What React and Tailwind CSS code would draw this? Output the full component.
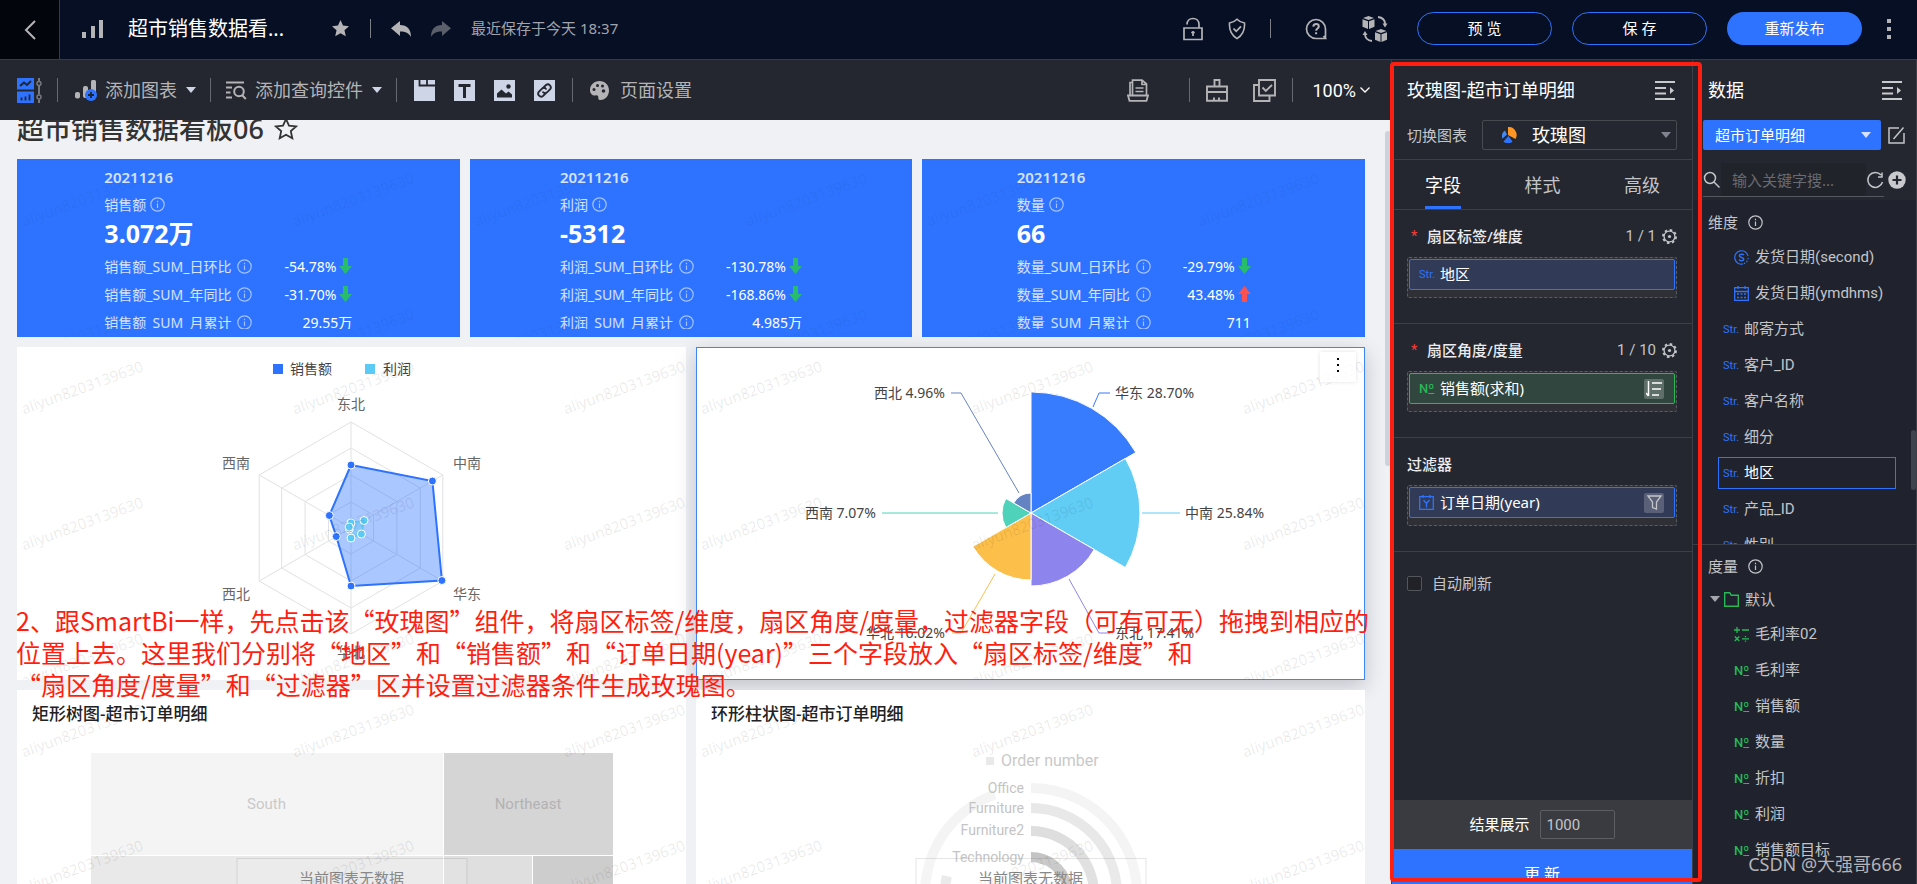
import clsx from "clsx";

const KPI_CARDS = [
  {
    date: "20211216",
    name: "销售额",
    value: "3.072万",
    rows: [
      { label: "销售额_SUM_日环比", value: "-54.78%", trend: "down" },
      { label: "销售额_SUM_年同比", value: "-31.70%", trend: "down" },
      { label: "销售额_SUM_月累计", value: "29.55万" },
    ],
  },
  {
    date: "20211216",
    name: "利润",
    value: "-5312",
    rows: [
      { label: "利润_SUM_日环比", value: "-130.78%", trend: "down" },
      { label: "利润_SUM_年同比", value: "-168.86%", trend: "down" },
      { label: "利润_SUM_月累计", value: "4.985万" },
    ],
  },
  {
    date: "20211216",
    name: "数量",
    value: "66",
    rows: [
      { label: "数量_SUM_日环比", value: "-29.79%", trend: "down" },
      { label: "数量_SUM_年同比", value: "43.48%", trend: "up" },
      { label: "数量_SUM_月累计", value: "711" },
    ],
  },
];

const DIMENSIONS = [
  { type: "second", name: "发货日期(second)", nested: true },
  { type: "date", name: "发货日期(ymdhms)", nested: true },
  { type: "str", name: "邮寄方式" },
  { type: "str", name: "客户_ID" },
  { type: "str", name: "客户名称" },
  { type: "str", name: "细分" },
  { type: "str", name: "地区", selected: true },
  { type: "str", name: "产品_ID" },
  { type: "str", name: "性别" },
];

const MEASURES = [
  { type: "calc", name: "毛利率02", nested: true },
  { type: "num", name: "毛利率", nested: true },
  { type: "num", name: "销售额", nested: true },
  { type: "num", name: "数量", nested: true },
  { type: "num", name: "折扣", nested: true },
  { type: "num", name: "利润", nested: true },
  { type: "num", name: "销售额目标", nested: true },
];

/* ---------- icons ---------- */

const Svg = ({ w, h = w, box, className, children }) => (
  <svg
    width={w}
    height={h}
    viewBox={box || `0 0 ${w} ${h}`}
    fill="none"
    stroke="currentColor"
    className={clsx("shrink-0", className)}
    aria-hidden="true"
  >
    {children}
  </svg>
);

const BackIcon = () => (
  <Svg w={14} h={20} className="text-[#b4b4b6]">
    <path d="M12 1 3 10l9 9" strokeWidth="2" />
  </Svg>
);

const BarsIcon = () => (
  <Svg w={22} h={18} className="text-[#b4b4b6]">
    <path d="M0 12h4v6H0zM9 6h4v12H9zM17 0h4v18h-4z" fill="currentColor" stroke="none" />
  </Svg>
);

const StarIcon = () => (
  <Svg w={17} h={17} box="0 0 24 24" className="text-[#b4b4b6]">
    <path d="m12 0 3.500 7.900 8.500.9-6.400 5.700 1.900 8.500L12 18.600 4.500 23l1.900-8.500L0 8.800l8.500-.9z" fill="currentColor" stroke="none" />
  </Svg>
);

const StarOutline = () => (
  <Svg w={24} h={24} className="text-[#333]">
    <path d="m12 2 3 6.600 7.200.8-5.400 4.800 1.500 7.100L12 17.700l-6.300 3.600 1.500-7.100L1.800 9.400 9 8.600z" strokeWidth="1.8" />
  </Svg>
);

const UndoIcon = ({ className }) => (
  <Svg w={20} h={16} className={className}>
    <path d="M9 0v4c7 0 11 4 11 12-2.500-4-5-5.500-11-5.500V15L0 7.300z" fill="currentColor" stroke="none" />
  </Svg>
);

const LockIcon = () => (
  <Svg w={20} h={24} className="text-[#b4b4b6]">
    <path d="M1 11h18v11.500H1zM4 7.500C4 4 6.500 1.500 10 1.500S16 4 16 7.500V11" strokeWidth="1.700" />
    <path d="M10 14v5M8.200 15.500h3.600" strokeWidth="1.700" />
  </Svg>
);

const ShieldIcon = () => (
  <Svg w={18} h={22}>
    <path d="M9 1.200c2 2 4.500 3.300 7.500 3.800.5 7-1.500 12-7.500 15.600C3 17 1 12 1.500 5 4.500 4.500 7 3.200 9 1.200z" strokeWidth="1.600" />
    <path d="m5.500 10.500 2.700 2.800 4.800-5" strokeWidth="1.800" />
  </Svg>
);

const HelpIcon = () => (
  <Svg w={22}>
    <path d="M20.500 19.800V11A9.500 9.500 0 1 0 11 20.500h9.500l-2-2.500" strokeWidth="1.700" />
    <path d="M8.300 8.600c.1-1.700 1.200-2.600 2.800-2.600 1.600 0 2.700 1 2.700 2.400 0 2-2.700 2.200-2.700 4.300M11.100 14.300v2" strokeWidth="2" />
  </Svg>
);

const CubesIcon = () => (
  <Svg w={26}>
    <g fill="currentColor" stroke="none">
      <path d="m6.500 0 5.500 2-5.500 2L1 2zM.5 3.300 6 5.300V13L.5 10.700zM12.500 3.300 7 5.300V13l5.500-2.300z" />
      <path d="m19 13 5.500 2-5.500 2-5.500-2zM13 16.300l5.500 2V26L13 23.700zM25 16.300l-5.500 2V26l5.500-2.300z" />
      <path d="m20.500 7.500 5 0-2.500 4zM.5 19l5 0L3 15z" />
    </g>
    <path d="M16 1c4 .5 7 3 7 7M10 25c-4-.5-7-3-7-7" strokeWidth="1.800" />
  </Svg>
);

const LayoutIcon = () => (
  <Svg w={26} h={25}>
    <path d="M0 0h17v11.500H0zM0 13.500h17V25H0z" fill="#2d73ff" stroke="none" />
    <path d="m3 8 4-3.500L10 7l4-4" stroke="#1d2637" strokeWidth="2" />
    <path d="M4.500 22.500v-3M8.500 22.500v-4M12.500 22.500v-6" stroke="#1d2637" strokeWidth="1.800" />
    <path d="M22 0v3M22 8v8.500M22 21.500V25" stroke="#77797f" strokeWidth="2" />
    <circle cx="22" cy="5.500" r="2" stroke="#77797f" strokeWidth="1.500" />
    <circle cx="22" cy="19" r="2" stroke="#77797f" strokeWidth="1.500" />
  </Svg>
);

const AddChartIcon = () => (
  <Svg w={22} h={21}>
    <rect x="0" y="12" width="5" height="6.500" rx="2" fill="#b4b4b6" stroke="none" />
    <rect x="8" y="6" width="5" height="12" rx="2" fill="#b4b4b6" stroke="none" />
    <rect x="16" y="0" width="5" height="14" rx="1.500" fill="#b4b4b6" stroke="none" />
    <circle cx="16" cy="15" r="6" fill="#2d73ff" stroke="none" />
    <path d="M16 12v6M13 15h6" stroke="#1b2435" strokeWidth="1.800" />
  </Svg>
);

const QueryIcon = () => (
  <Svg w={21} h={19}>
    <path d="M0 1.500h18M0 6.500h6M0 11.500h4.500M0 16.500h6" strokeWidth="2" />
    <circle cx="13" cy="10.500" r="4.800" strokeWidth="2" />
    <path d="m16 14 3.800 4" strokeWidth="2" />
  </Svg>
);

const TabIcon = () => (
  <Svg w={21}>
    <path d="M0 0h21v21H0z" fill="#ced5e7" stroke="none" />
    <path d="M5.500 0v5.500H21M13 0v5" stroke="#24272f" strokeWidth="1.800" />
  </Svg>
);

const TextIcon = () => (
  <Svg w={21}>
    <path d="M0 0h21v21H0z" fill="#ced5e7" stroke="none" />
    <path d="M4.500 5.500h12M10.500 5v13" stroke="#24272f" strokeWidth="3" />
  </Svg>
);

const ImageIcon = () => (
  <Svg w={21}>
    <path d="M0 0h21v21H0z" fill="#ced5e7" stroke="none" />
    <path d="M3 17.500v-4l4.500-4 4.500 4 2.500-2 3.500 3v3z" fill="#24272f" stroke="none" />
    <circle cx="14.500" cy="6.500" r="2.200" fill="#24272f" stroke="none" />
  </Svg>
);

const LinkIcon = () => (
  <Svg w={21}>
    <path d="M0 0h21v21H0z" fill="#ced5e7" stroke="none" />
    <g stroke="#24272f" strokeWidth="1.800" strokeLinecap="round">
      <path d="M9.500 7.500 12 5a3 3 0 0 1 4.200 4.200l-3 3a3 3 0 0 1-4.200 0" />
      <path d="M11.500 13.500 9 16a3 3 0 0 1-4.200-4.200l3-3a3 3 0 0 1 4.200 0" />
    </g>
  </Svg>
);

const PaletteIcon = () => (
  <Svg w={19}>
    <path
      d="M9.500 0C4 0 0 4 0 9c0 4 3 6 5.500 5.500 2-.5 3 .5 2.800 2.200C8.200 18.300 9 19 10.500 19 15.500 19 19 14.500 19 9.500 19 4 15 0 9.500 0z"
      fill="currentColor"
      stroke="none"
    />
    <g fill="#24272f" stroke="none">
      <circle cx="4" cy="8.500" r="1.500" />
      <circle cx="7.500" cy="4.500" r="1.500" />
      <circle cx="12.500" cy="5" r="1.500" />
      <circle cx="13.500" cy="10" r="1.800" />
    </g>
  </Svg>
);

const PrintIcon = () => (
  <Svg w={22} h={23}>
    <path d="M3 16V3.500h2.500M5.500 16V1.200h9.500L19.500 5v11M15 1v4.500h4.500" strokeWidth="1.700" />
    <path d="M8.500 9h8M8.500 12.500h8" strokeWidth="1.700" />
    <path d="M1 16.500h20l-1.500 5.300h-17z" strokeWidth="1.800" />
  </Svg>
);

const BrushIcon = () => (
  <Svg w={22} h={23}>
    <path d="M8.500 7.500V1h5v6.500M1 7.500h20v14.300H1zM1 13h20" strokeWidth="1.900" />
    <path d="M8 22v-3.500M13 22v-3.500" strokeWidth="1.900" />
  </Svg>
);

const CopyIcon = () => (
  <Svg w={23} h={23}>
    <path d="M6 1h16v15.500H6zM6 6H1v16h15.500v-5" strokeWidth="1.900" />
    <path d="m9.500 8.500 3.300 3.500L19 6" strokeWidth="1.900" />
  </Svg>
);

const CollapseIcon = () => (
  <Svg w={20} h={19} className="text-[#c9cacd]">
    <path d="M0 1h20M0 7h11M0 12.500h11M0 18h20" strokeWidth="1.900" />
    <path d="m15 6 4 3.500-4 3.500z" fill="currentColor" stroke="none" />
  </Svg>
);

const InfoIcon = ({ className }) => (
  <Svg w={15} className={className}>
    <circle cx="7.500" cy="7.500" r="6.700" strokeWidth="1.200" />
    <path d="M7.500 6.500V11M7.500 3.800v1.500" strokeWidth="1.200" />
  </Svg>
);

const GearIcon = () => (
  <Svg w={15} box="0 0 16 16" className="text-[#c3c5c9]">
    <circle cx="8" cy="8" r="5.800" strokeWidth="1.400" />
    <circle cx="8" cy="8" r="7" strokeWidth="2" strokeDasharray="2.750 2.750" />
    <circle cx="8" cy="8" r="1.700" fill="currentColor" stroke="none" />
  </Svg>
);

const RoseIcon = () => (
  <Svg w={15} h={16} className="pointer-events-none absolute left-5 top-[7px]">
    <path d="M6 8V0a8 8 0 0 1 7.500 12z" fill="#ff9524" stroke="none" />
    <path d="m6.500 9 4 5.500a6.500 6.500 0 0 1-9 0z" fill="#2d73ff" stroke="none" />
    <path d="M5 7.500.5 11.500A6 6 0 0 1 3 3.500z" fill="#4388f7" stroke="none" />
  </Svg>
);

const Caret = ({ className }) => (
  <Svg w={10} h={6} className={className}>
    <path d="M0 0h10L5 6z" fill="currentColor" stroke="none" />
  </Svg>
);

const TrendArrow = ({ trend }) => (
  <Svg w={13} h={16} className={trend === "up" ? "rotate-180 text-[#fb5150]" : "text-[#27bd6a]"}>
    <path d="M4 0h5v8h4l-6.500 8L0 8h4z" fill="currentColor" stroke="none" />
  </Svg>
);

const SortIcon = () => (
  <Svg w={16}>
    <path d="M2.500 0v15M0 12l2.500 3M6 2h10M6 8h9M6 14h7" strokeWidth="1.500" />
  </Svg>
);

const FunnelIcon = () => (
  <Svg w={15}>
    <path d="M1 1h13L9.500 7v7l-4-1.500V7z" strokeWidth="1.300" />
  </Svg>
);

const FieldIcon = ({ type }) => {
  if (type === "str") {
    return <span className="w-[17px] font-[Roboto] text-[11px] leading-none text-[#2d73ff]">Str.</span>;
  }
  if (type === "num") {
    return (
      <span className="w-4 font-[Roboto] text-[13px] leading-none font-medium text-[#27b956]">
        N<span className="underline underline-offset-0">º</span>
      </span>
    );
  }
  if (type === "year") {
    return (
      <Svg w={15} className="text-[#2d73ff]">
        <path d="M.7 1.700h13.600v12.600H.700zM4 0v3M11 0v3M4.500 5l3 3.500 3-3.500M7.500 8.500v4" strokeWidth="1.300" />
      </Svg>
    );
  }
  if (type === "date") {
    return (
      <Svg w={15} className="text-[#2d73ff]">
        <path d="M.7 1.700h13.600v12.600H.700zM.7 5.500h13.600M4 0v3M11 0v3" strokeWidth="1.300" />
        <path d="M3 8h9.500M3 11.500h9.500" strokeWidth="1.300" strokeDasharray="2 1.500" />
      </Svg>
    );
  }
  if (type === "second") {
    return (
      <Svg w={15} className="text-[#2d73ff]">
        <path d="M9 14A6.700 6.700 0 1 1 14 6" strokeWidth="1.200" />
        <path d="M14.200 8a6.700 6.700 0 0 1-5 6" strokeWidth="1.200" strokeDasharray="1.500 1.500" />
        <path d="M9.800 5.200C9 3.800 5.300 3.800 5.300 5.800c0 2.200 4.500 1.200 4.500 3.400 0 2-4 2-4.800.5" strokeWidth="1.400" />
      </Svg>
    );
  }
  return (
    <Svg w={15} className="text-[#27b956]">
      <path d="M0 3h6M3 0v6M8 3h7M.800 9.500l4.500 4.500M5.300 9.500.800 14M8 11.800h7M11.500 9v1.300M11.500 13.500v1.300" strokeWidth="1.300" />
    </Svg>
  );
};

/* ---------- header and toolbar ---------- */

const Header = () => (
  <header className="flex h-[60px] shrink-0 items-center border-b border-[#343a48] bg-[#060f24] text-[#b4b4b6]">
    <button aria-label="返回" className="flex h-full w-[60px] items-center justify-center border-r border-[#343a48] bg-[#02050c]">
      <BackIcon />
    </button>
    <div className="flex flex-1 items-center pb-[2px] pl-[22px]">
      <BarsIcon />
      <h1 className="ml-6 w-[204px] text-[20px] leading-7 text-white">超市销售数据看...</h1>
      <button aria-label="收藏">
        <StarIcon />
      </button>
      <span className="ml-[21px] h-[19px] w-px bg-[#7d7f86]" />
      <button aria-label="撤销" className="ml-5">
        <UndoIcon className="text-[#b4b4b6]" />
      </button>
      <button aria-label="重做" className="ml-5">
        <UndoIcon className="-scale-x-100 text-[#5b5f6b]" />
      </button>
      <span className="ml-5 text-[15px] text-[#a1a4ac]">最近保存于今天 18:37</span>
    </div>
    <div className="flex items-center pb-[2px] pr-[26px]">
      <button aria-label="解锁"><LockIcon /></button>
      <button aria-label="安全" className="ml-[25px]"><ShieldIcon /></button>
      <span className="ml-6 h-[19px] w-px bg-[#7d7f86]" />
      <button aria-label="帮助" className="ml-[34px]"><HelpIcon /></button>
      <button aria-label="资源迁移" className="ml-[35px]"><CubesIcon /></button>
      <button className="ml-[29px] h-[33px] w-[135px] rounded-full border border-[#2d73ff] text-[15px] text-white">预 览</button>
      <button className="ml-5 h-[33px] w-[135px] rounded-full border border-[#2d73ff] text-[15px] text-white">保 存</button>
      <button className="ml-5 h-[33px] w-[135px] rounded-full bg-[#2d73ff] text-[15px] text-white">重新发布</button>
      <button aria-label="更多" className="ml-[25px] flex flex-col gap-1">
        <span className="size-1 bg-current" />
        <span className="size-1 bg-current" />
        <span className="size-1 bg-current" />
      </button>
    </div>
  </header>
);

const Divider = ({ className }) => <span className={clsx("h-6 w-px bg-[#66696f]", className)} />;

const Toolbar = () => (
  <div className="flex h-[60px] shrink-0 items-center bg-[#24272f] pl-[17px] text-[18px] text-[#b4b4b6]">
    <button aria-label="布局"><LayoutIcon /></button>
    <Divider className="ml-[14px]" />
    <button className="ml-[17px] flex items-center whitespace-nowrap">
      <AddChartIcon />
      <span className="ml-2">添加图表</span>
      <Caret className="ml-[9px] text-[#ced5e7]" />
    </button>
    <Divider className="ml-[14px]" />
    <button className="ml-[15px] flex items-center whitespace-nowrap">
      <QueryIcon />
      <span className="ml-2">添加查询控件</span>
      <Caret className="ml-[9px] text-[#ced5e7]" />
    </button>
    <Divider className="ml-[14px]" />
    <div className="ml-[17px] flex gap-[19px]">
      <button aria-label="标签页"><TabIcon /></button>
      <button aria-label="文本"><TextIcon /></button>
      <button aria-label="图片"><ImageIcon /></button>
      <button aria-label="链接"><LinkIcon /></button>
    </div>
    <Divider className="ml-[17px]" />
    <button className="ml-[17px] flex items-center whitespace-nowrap">
      <PaletteIcon />
      <span className="ml-[11px]">页面设置</span>
    </button>
    <div className="ml-auto flex items-center pr-[21px]">
      <button aria-label="打印"><PrintIcon /></button>
      <Divider className="ml-10" />
      <button aria-label="清除格式" className="ml-4"><BrushIcon /></button>
      <button aria-label="批量操作" className="ml-[25px]"><CopyIcon /></button>
      <Divider className="ml-4" />
      <button className="ml-[19px] flex items-center gap-1 font-[Roboto] text-white">
        100%
        <Svg w={10} h={6}>
          <path d="m.500.500 4.500 4.500L9.500.5" strokeWidth="1.300" />
        </Svg>
      </button>
    </div>
  </div>
);

/* ---------- dashboard ---------- */

const Watermark = ({ light }) => (
  <div
    aria-hidden="true"
    className={clsx(
      "pointer-events-none absolute inset-0 grid auto-rows-[136px] grid-cols-[repeat(3,271px)] overflow-hidden text-[15px]",
      light ? "text-[#000]/[0.05]" : "text-[#000]/[0.09]",
    )}
  >
    {Array.from({ length: 9 }, (_, i) => (
      <span key={i} className="flex h-20 w-[130px] -rotate-20 items-center justify-center">
        aliyun8203139630
      </span>
    ))}
  </div>
);

const KpiCard = ({ card }) => (
  <div className="relative flex h-[178px] justify-center overflow-hidden bg-[#2d73ff] pr-5 pt-[5px] text-[14px] text-white">
    <Watermark light />
    <div className="h-[165px] overflow-hidden">
      <p className="text-[15px] leading-[27px] font-semibold text-white/80">{card.date}</p>
      <p className="flex h-[27px] items-center gap-1 text-white/80">
        {card.name}
        <InfoIcon className="opacity-70" />
      </p>
      <p className="mb-1 text-[25px] leading-[30px] font-bold">{card.value}</p>
      {card.rows.map((row) => (
        <div key={row.label} className="flex h-7 items-center justify-between gap-8">
          <span className="flex items-center gap-[6px] text-white/80">
            {row.label}
            <InfoIcon className="opacity-70" />
          </span>
          <span className="flex items-center gap-[3px]">
            {row.value}
            {row.trend && <TrendArrow trend={row.trend} />}
          </span>
        </div>
      ))}
    </div>
  </div>
);

const polar = (cx, cy, r, deg) => {
  const a = ((deg - 90) * Math.PI) / 180;
  return [cx + r * Math.cos(a), cy + r * Math.sin(a)];
};

const hexPoints = (radii) =>
  radii.map((r, i) => polar(334, 181, r, i * 60).map((n) => n.toFixed(1)).join(",")).join(" ");

const RADAR_SERIES = [
  { name: "销售额", color: "#2d73ff", values: [63, 94, 105, 58, 17, 25] },
  { name: "利润", color: "#5bcaf5", values: [5, 15, 12, 10, 2, 2] },
];

const RADAR_LABELS = [
  { text: "东北", x: 334, y: 62 },
  { text: "中南", x: 450, y: 121 },
  { text: "华东", x: 450, y: 252 },
  { text: "华北", x: 334, y: 310 },
  { text: "西北", x: 219, y: 252 },
  { text: "西南", x: 219, y: 121 },
];

const RadarChart = () => (
  <svg width="669" height="333" viewBox="0 0 669 333" className="shrink-0 text-[14px]" role="img" aria-label="雷达图">
    <rect x="256" y="17" width="10" height="10" fill="#2d73ff" />
    <text x="273" y="27" fill="#444">销售额</text>
    <rect x="348" y="17" width="10" height="10" fill="#5bcaf5" />
    <text x="366" y="27" fill="#444">利润</text>
    <g fill="none" stroke="#e2e2e4">
      {[26, 53, 80, 106].map((r) => (
        <polygon key={r} points={hexPoints([r, r, r, r, r, r])} />
      ))}
      {[0, 60, 120, 180, 240, 300].map((deg) => {
        const [x, y] = polar(334, 181, 106, deg);
        return <line key={deg} x1="334" y1="181" x2={x} y2={y} />;
      })}
    </g>
    {RADAR_SERIES.map((s) => (
      <g key={s.name}>
        <polygon points={hexPoints(s.values)} fill={s.color} fillOpacity="0.4" stroke={s.color} strokeWidth="2" />
        {s.values.map((r, i) => {
          const [x, y] = polar(334, 181, r, i * 60);
          return <circle key={i} cx={x} cy={y} r="4" fill={s.color} stroke="#fff" />;
        })}
      </g>
    ))}
    {RADAR_LABELS.map((l) => (
      <text key={l.text} x={l.x} y={l.y} textAnchor="middle" fill="#666">
        {l.text}
      </text>
    ))}
  </svg>
);

const ROSE_SLICES = [
  { label: "华东 28.70%", r: 121, color: "#377bff", line: "397,60 403,46 414,46", x: 419, y: 51 },
  { label: "中南 25.84%", r: 109, color: "#61cdf5", line: "446,166 484,166", x: 489, y: 171 },
  { label: "东北 17.41%", r: 73, color: "#8d85ed", line: "373,232 403,286 414,286", x: 419, y: 291 },
  { label: "华北 16.02%", r: 67, color: "#fcbf4a", line: "299,227 265,286 256,286", x: 249, y: 291, end: true },
  { label: "西南 7.07%", r: 29, color: "#4ed2ba", line: "302,166 186,166", x: 180, y: 171, end: true },
  { label: "西北 4.96%", r: 20, color: "#6483c2", line: "323,146 265,46 255,46", x: 249, y: 51, end: true },
];

const RoseChart = () => (
  <svg width="669" height="333" viewBox="0 0 669 333" className="shrink-0 text-[14px]" role="img" aria-label="玫瑰图">
    {ROSE_SLICES.map((s, i) => {
      const [x1, y1] = polar(335, 166, s.r, i * 60);
      const [x2, y2] = polar(335, 166, s.r, i * 60 + 60);
      return (
        <g key={s.label}>
          <path d={`M335 166 ${x1} ${y1}A${s.r} ${s.r} 0 0 1 ${x2} ${y2}z`} fill={s.color} stroke="#fff" />
          <polyline points={s.line} fill="none" stroke={s.color} />
          <text x={s.x} y={s.y} textAnchor={s.end ? "end" : "start"} fill="#444">
            {s.label}
          </text>
        </g>
      );
    })}
  </svg>
);

const NoData = () => (
  <div className="absolute top-[168px] left-1/2 flex h-10 w-[231px] -translate-x-1/2 justify-center border border-black/10 bg-white/10 pt-2 text-[15px] text-[#888]">
    当前图表无数据
  </div>
);

const TreemapPlaceholder = () => (
  <div className="mx-auto mt-[26px] grid w-[522px] grid-cols-[352px_88px_80px] grid-rows-[102px_101px] gap-px bg-white font-[Roboto] text-[15px]">
    <div className="flex items-center justify-center bg-[#f4f4f4] text-[#c9c9c9]">South</div>
    <div className="col-span-2 flex items-center justify-center bg-[#d5d5d5] text-[#b2b2b2]">Northeast</div>
    <div className="bg-[#e9e9e9]" />
    <div className="bg-[#dfdfdf]" />
    <div className="bg-[#cdcdcd]" />
  </div>
);

const RINGS = [
  { name: "Office", r: 106, end: 340, color: "#f4f4f4", y: 103 },
  { name: "Furniture", r: 86, end: 282, color: "#e8e8e8", y: 123 },
  { name: "Furniture2", r: 63, end: 200, color: "#dedede", y: 145 },
  { name: "Technology", r: 37, end: 150, color: "#c4c4c4", y: 172 },
];

const RingPlaceholder = () => (
  <svg width="669" height="160" viewBox="0 37 669 160" className="mx-auto block font-[Roboto] text-[14px]" role="img" aria-label="环形柱状图">
    <rect x="290" y="67" width="8" height="8" fill="#e9e9e9" />
    <text x="305" y="76" fontSize="16" fill="#c9c9c9">Order number</text>
    {RINGS.map((ring) => {
      const [x1, y1] = polar(335, 204, ring.r, 0);
      const [x2, y2] = polar(335, 204, ring.r, ring.end);
      return (
        <g key={ring.name}>
          <path
            d={`M${x1} ${y1}A${ring.r} ${ring.r} 0 ${ring.end > 180 ? 1 : 0} 1 ${x2} ${y2}`}
            fill="none"
            stroke={ring.color}
            strokeWidth="10"
          />
          <text x="328" y={ring.y} textAnchor="end" fill="#c4c4c4">
            {ring.name}
          </text>
        </g>
      );
    })}
  </svg>
);

const Note = () => (
  <p className="pointer-events-none absolute top-[484px] left-4 z-20 font-['Noto_Sans_CJK_SC',sans-serif] text-[25px] leading-8 whitespace-nowrap text-[#ff1e0f]">
    <span className="block">
      2、跟SmartBi一样，先点击该“玫瑰图”组件，将扇区标签/维度，扇区角度/度量，过滤器字段（可有可无）拖拽到相应的
    </span>
    <span className="block">位置上去。这里我们分别将“地区”和“销售额”和“订单日期(year)”三个字段放入“扇区标签/维度”和</span>
    <span className="block">“扇区角度/度量”和“过滤器”区并设置过滤器条件生成玫瑰图。</span>
  </p>
);

const Dashboard = () => (
  <main className="relative min-h-0 flex-1 overflow-hidden bg-[#f0f1f5] pl-[17px] pr-[26px] text-[#222]">
    <h2 className="-mt-[9px] mb-3 flex h-9 items-center gap-[10px] text-[27px] font-medium text-[#333]">
      超市销售数据看板06
      <StarOutline />
    </h2>
    <div className="grid grid-cols-3 gap-[10px]">
      {KPI_CARDS.map((card) => (
        <KpiCard key={card.name} card={card} />
      ))}
    </div>
    <div className="mt-[10px] grid grid-cols-2 gap-[10px]">
      <section className="relative flex h-[333px] justify-center overflow-hidden bg-white">
        <RadarChart />
        <Watermark />
      </section>
      <section className="relative flex h-[333px] justify-center bg-white shadow-[inset_0_0_0_1px_#3f86f5,0_6px_20px_rgba(0,0,30,0.2)]">
        <RoseChart />
        <Watermark />
        <button
          aria-label="图表菜单"
          className="absolute top-[5px] right-[9px] flex h-[30px] w-9 flex-col items-center justify-center gap-1 bg-white/80 pb-1 shadow-[0_0_4px_rgba(0,0,0,0.12)]"
        >
          <span className="size-[2px] bg-black" />
          <span className="size-[2px] bg-black" />
          <span className="size-[2px] bg-black" />
        </button>
      </section>
      <section className="relative h-[333px] bg-white">
        <h3 className="px-[15px] pt-[11px] pb-px text-[17px] leading-[25px] font-medium">矩形树图-超市订单明细</h3>
        <TreemapPlaceholder />
        <NoData />
        <Watermark />
      </section>
      <section className="relative h-[333px] bg-white">
        <h3 className="px-[15px] pt-[11px] pb-px text-[17px] leading-[25px] font-medium">环形柱状图-超市订单明细</h3>
        <RingPlaceholder />
        <NoData />
        <Watermark />
      </section>
    </div>
    <div className="absolute top-[11px] right-0 h-[335px] w-[6px] rounded-full bg-[#cdd1dc]" />
    <Note />
  </main>
);

/* ---------- chart settings ---------- */

const DropZone = ({ title, required, count, type, field, action }) => {
  const green = type === "num";
  return (
    <div className="h-[114px] border-b border-[#3c3f45] px-[15px] pt-[13px]">
      <div className="flex h-[27px] items-center text-[15px] text-[#c3c5c9]">
        {required && <span className="ml-1 w-4 font-[Roboto] text-[#f0403a]">*</span>}
        <h3 className="font-medium text-[#ececee]">{title}</h3>
        {count && (
          <>
            <span className="mr-[6px] ml-auto font-[Roboto] text-[15px]">{count}</span>
            <button aria-label={`${title}设置`}><GearIcon /></button>
          </>
        )}
      </div>
      <div className="mt-[7px] h-[41px] rounded-[2px] border border-dashed border-[#5a5d63] bg-[#2e3035] p-px">
        <div
          className={clsx(
            "flex h-[31px] items-center rounded-[2px] border pr-[10px] pl-[9px] text-[15px] text-white",
            green ? "border-[#27b956] bg-[#31463e]" : "border-[#2d73ff] bg-[#313b57]",
          )}
        >
          <span className="flex w-[21px] items-center"><FieldIcon type={type} /></span>
          {field}
          {action && (
            <button
              aria-label={`${field}选项`}
              className={clsx("ml-auto flex size-5 items-center justify-center rounded-[2px]", green ? "bg-[#5d6f68]" : "bg-[#596078] text-[#c3c5c9]")}
            >
              {action}
            </button>
          )}
        </div>
      </div>
    </div>
  );
};

const ConfigPanel = () => (
  <aside className="relative flex w-[302px] shrink-0 flex-col border-x border-[#3c3f48] bg-[#24272f] text-[#c3c5c9]">
    <div className="flex h-[60px] shrink-0 items-center justify-between pr-[17px] pl-[15px]">
      <h2 className="text-[18px] text-white">玫瑰图-超市订单明细</h2>
      <button aria-label="收起"><CollapseIcon /></button>
    </div>
    <div className="flex h-10 shrink-0 items-start justify-between border-b border-[#3c3f45] px-[15px]">
      <label htmlFor="chart-type" className="text-[15px] leading-[30px]">切换图表</label>
      <div className="relative">
        <RoseIcon />
        <select
          id="chart-type"
          className="h-[30px] w-[195px] appearance-none rounded-[2px] border border-[#474a51] bg-transparent pl-[49px] text-[18px] leading-6 text-white"
        >
          <option>玫瑰图</option>
        </select>
        <Caret className="pointer-events-none absolute top-3 right-[6px] text-[#81848f]" />
      </div>
    </div>
    <div role="tablist" className="flex h-[50px] shrink-0 justify-between border-b border-[#3c3f45] pr-[32px] pl-[33px] text-[18px]">
      <button role="tab" aria-selected="true" className="border-b-[3px] border-[#2d73ff] pt-[5px] text-white">字段</button>
      <button role="tab" aria-selected="false" className="pt-[2px]">样式</button>
      <button role="tab" aria-selected="false" className="pt-[2px]">高级</button>
    </div>
    <DropZone title="扇区标签/维度" required count="1 / 1" type="str" field="地区" />
    <DropZone title="扇区角度/度量" required count="1 / 10" type="num" field="销售额(求和)" action={<SortIcon />} />
    <DropZone title="过滤器" type="year" field="订单日期(year)" action={<FunnelIcon />} />
    <label className="mt-5 ml-[15px] flex items-center gap-[10px] text-[15px]">
      <input type="checkbox" className="size-[15px] appearance-none rounded-[2px] border border-[#53565c] bg-[#202228]" />
      自动刷新
    </label>
    <div className="mt-auto flex h-[49px] shrink-0 items-center justify-center bg-[#3a3b40]">
      <label htmlFor="row-limit" className="text-[15px] text-white">结果展示</label>
      <input
        id="row-limit"
        defaultValue="1000"
        className="ml-[10px] h-[29px] w-[75px] rounded-[2px] border border-[#5c5e64] bg-transparent px-[6px] font-[Roboto] text-[15px]"
      />
    </div>
    <button className="flex h-[35px] shrink-0 justify-center overflow-hidden bg-[#2d73ff] text-[16px] leading-[50px] text-white">更 新</button>
    <div className="pointer-events-none absolute top-[2px] -right-[10px] bottom-[2px] -left-[2px] z-10 rounded-[4px] border-4 border-[#ff1e0f]" />
  </aside>
);

/* ---------- data panel ---------- */

const FieldRow = ({ field }) => (
  <li className="flex h-9 shrink-0 items-center pr-5 pl-[25px]">
    <button
      className={clsx(
        "flex h-8 w-full items-center border text-left font-[Roboto,'Noto_Sans_CJK_SC',sans-serif] text-[15px] whitespace-nowrap",
        field.nested ? "pl-[15px]" : "pl-1",
        field.selected ? "border-[#2d73ff] text-white" : "border-transparent",
      )}
    >
      <span className="flex w-[21px] shrink-0 items-center">
        <FieldIcon type={field.type} />
      </span>
      {field.name}
    </button>
  </li>
);

const DataPanel = () => (
  <aside className="flex w-[224px] shrink-0 flex-col border-r border-[#3c3f48] bg-[#20232d] text-[#c3c5c9]">
    <div className="h-[140px] shrink-0 bg-[#24272f]">
      <div className="flex h-[60px] items-center justify-between pr-[14px] pl-[15px]">
        <h2 className="text-[18px] text-white">数据</h2>
        <button aria-label="收起数据"><CollapseIcon /></button>
      </div>
      <div className="flex items-center gap-[7px] pl-[10px]">
        <div className="relative">
          <select
            aria-label="数据集"
            className="h-[30px] w-[178px] appearance-none rounded-[2px] bg-[#2d73ff] pl-3 text-[15px] text-white"
          >
            <option>超市订单明细</option>
          </select>
          <Caret className="pointer-events-none absolute top-3 right-[10px] text-[#d5e3ff]" />
        </div>
        <button aria-label="编辑数据集">
          <Svg w={17}>
            <path d="M11 1H1v15h15V6M5.500 12 15.500.5" strokeWidth="1.500" />
          </Svg>
        </button>
      </div>
      <div className="flex pl-[10px]">
        <div className="mt-[13px] flex h-[34px] w-[181px] items-center border-b border-[#55585f]">
          <Svg w={17}>
            <circle cx="7" cy="7" r="5.500" strokeWidth="1.500" />
            <path d="m11 11 5.500 5.500" strokeWidth="1.500" />
          </Svg>
          <input
            aria-label="搜索字段"
            placeholder="输入关键字搜..."
            className="ml-px h-full w-[145px] bg-[#202329] pl-[11px] text-[15px] placeholder:text-[#686b72]"
          />
          <button aria-label="刷新">
            <Svg w={18}>
              <path d="M15 4A7.500 7.500 0 1 0 16.500 11M16 1.500V6h-4" strokeWidth="1.500" />
            </Svg>
          </button>
        </div>
        <button aria-label="新建字段" className="mt-[13px] ml-[4px]">
          <Svg w={18}>
            <circle cx="9" cy="9" r="8.700" fill="#c9cacd" stroke="none" />
            <path d="M9 4.500v9M4.500 9h9" stroke="#24272f" strokeWidth="2.200" />
          </Svg>
        </button>
      </div>
    </div>

    <div className="relative flex h-[345px] shrink-0 flex-col overflow-hidden border-b border-[#3c3f48] pt-[5px]">
      <h3 className="flex h-[34px] shrink-0 items-center gap-[10px] pl-[15px] text-[15px]">
        维度 <InfoIcon />
      </h3>
      <ul>
        {DIMENSIONS.map((f) => (
          <FieldRow key={f.name} field={f} />
        ))}
      </ul>
      <div className="absolute top-[230px] right-0 h-[60px] w-[5px] rounded-full bg-[#3f434e]" />
    </div>

    <div className="relative min-h-0 flex-1 overflow-hidden pt-[5px]">
      <h3 className="flex h-8 items-center gap-[10px] pl-[15px] text-[15px]">
        度量 <InfoIcon />
      </h3>
      <button className="flex h-[34px] items-center pl-[17px] text-[15px]">
        <Caret className="mr-1 text-[#a4a6ab]" />
        <Svg w={15} className="mr-[6px] text-[#27b956]">
          <path d="M.700.700h5l1.500 2.500h7.100v11H.700z" strokeWidth="1.400" />
        </Svg>
        默认
      </button>
      <ul>
        {MEASURES.map((f) => (
          <FieldRow key={f.name} field={f} />
        ))}
      </ul>
      <p className="absolute right-[14px] bottom-[6px] text-[18px] text-[#b3b4b8]">CSDN @大强哥666</p>
    </div>
  </aside>
);

const App = () => (
  <div
    lang="zh-CN"
    className="flex h-screen flex-col overflow-hidden font-['Noto_Sans','Noto_Sans_CJK_SC',sans-serif] leading-normal"
  >
    <Header />
    <div className="flex min-h-0 flex-1">
      <div className="flex min-w-0 flex-1 flex-col">
        <Toolbar />
        <Dashboard />
      </div>
      <ConfigPanel />
      <DataPanel />
    </div>
  </div>
);

export default App;
